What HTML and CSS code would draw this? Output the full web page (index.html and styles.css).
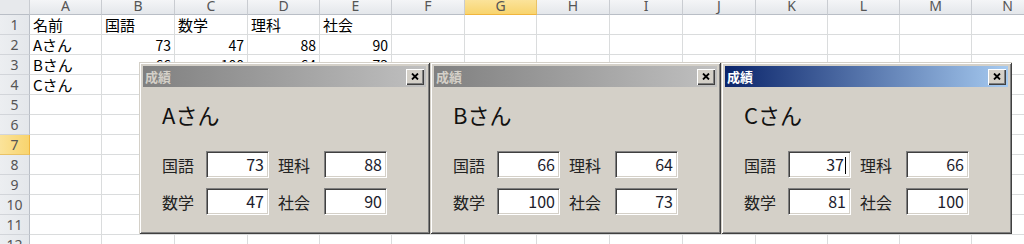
FILE: index.html
```html
<!DOCTYPE html>
<html lang="ja">
<head>
  <meta charset="UTF-8" />
  <title>成績フォーム</title>
  <link rel="stylesheet" href="styles.css">
</head>
<body>

<div class="sheet">
  <div class="hd corner"></div><div class="hd">A</div><div class="hd">B</div><div class="hd">C</div><div class="hd">D</div><div class="hd">E</div><div class="hd">F</div><div class="hd sel">G</div><div class="hd">H</div><div class="hd">I</div><div class="hd">J</div><div class="hd">K</div><div class="hd">L</div><div class="hd">M</div><div class="hd">N</div>

  <div class="rh">1</div><div class="c">名前</div><div class="c">国語</div><div class="c">数学</div><div class="c">理科</div><div class="c">社会</div><div class="c"></div><div class="c"></div><div class="c"></div><div class="c"></div><div class="c"></div><div class="c"></div><div class="c"></div><div class="c"></div><div class="c"></div>
  <div class="rh">2</div><div class="c">Aさん</div><div class="c num">73</div><div class="c num">47</div><div class="c num">88</div><div class="c num">90</div><div class="c"></div><div class="c"></div><div class="c"></div><div class="c"></div><div class="c"></div><div class="c"></div><div class="c"></div><div class="c"></div><div class="c"></div>
  <div class="rh">3</div><div class="c">Bさん</div><div class="c num">66</div><div class="c num">100</div><div class="c num">64</div><div class="c num">73</div><div class="c"></div><div class="c"></div><div class="c"></div><div class="c"></div><div class="c"></div><div class="c"></div><div class="c"></div><div class="c"></div><div class="c"></div>
  <div class="rh">4</div><div class="c">Cさん</div><div class="c"></div><div class="c"></div><div class="c"></div><div class="c"></div><div class="c"></div><div class="c"></div><div class="c"></div><div class="c"></div><div class="c"></div><div class="c"></div><div class="c"></div><div class="c"></div><div class="c"></div>
  <div class="rh">5</div><div class="c"></div><div class="c"></div><div class="c"></div><div class="c"></div><div class="c"></div><div class="c"></div><div class="c"></div><div class="c"></div><div class="c"></div><div class="c"></div><div class="c"></div><div class="c"></div><div class="c"></div><div class="c"></div>
  <div class="rh">6</div><div class="c"></div><div class="c"></div><div class="c"></div><div class="c"></div><div class="c"></div><div class="c"></div><div class="c"></div><div class="c"></div><div class="c"></div><div class="c"></div><div class="c"></div><div class="c"></div><div class="c"></div><div class="c"></div>
  <div class="rh sel">7</div><div class="c"></div><div class="c"></div><div class="c"></div><div class="c"></div><div class="c"></div><div class="c"></div><div class="c"></div><div class="c"></div><div class="c"></div><div class="c"></div><div class="c"></div><div class="c"></div><div class="c"></div><div class="c"></div>
  <div class="rh">8</div><div class="c"></div><div class="c"></div><div class="c"></div><div class="c"></div><div class="c"></div><div class="c"></div><div class="c"></div><div class="c"></div><div class="c"></div><div class="c"></div><div class="c"></div><div class="c"></div><div class="c"></div><div class="c"></div>
  <div class="rh">9</div><div class="c"></div><div class="c"></div><div class="c"></div><div class="c"></div><div class="c"></div><div class="c"></div><div class="c"></div><div class="c"></div><div class="c"></div><div class="c"></div><div class="c"></div><div class="c"></div><div class="c"></div><div class="c"></div>
  <div class="rh">10</div><div class="c"></div><div class="c"></div><div class="c"></div><div class="c"></div><div class="c"></div><div class="c"></div><div class="c"></div><div class="c"></div><div class="c"></div><div class="c"></div><div class="c"></div><div class="c"></div><div class="c"></div><div class="c"></div>
  <div class="rh">11</div><div class="c"></div><div class="c"></div><div class="c"></div><div class="c"></div><div class="c"></div><div class="c"></div><div class="c"></div><div class="c"></div><div class="c"></div><div class="c"></div><div class="c"></div><div class="c"></div><div class="c"></div><div class="c"></div>
  <div class="rh">12</div><div class="c"></div><div class="c"></div><div class="c"></div><div class="c"></div><div class="c"></div><div class="c"></div><div class="c"></div><div class="c"></div><div class="c"></div><div class="c"></div><div class="c"></div><div class="c"></div><div class="c"></div><div class="c"></div>
</div>

<div class="forms">
  <div class="form">
    <div class="titlebar">
      <span class="title">成績</span>
      <span class="close"><svg width="8" height="7" viewBox="0 0 8 7"><path d="M1 0.5 L7 6.5 M7 0.5 L1 6.5" stroke="#000" stroke-width="1.8" fill="none"/></svg></span>
    </div>
    <div class="form-body">
      <div class="name">Aさん</div>
      <div class="scores">
        <div class="label">国語</div><div class="box">73</div>
        <div class="label">理科</div><div class="box">88</div>
        <div class="label">数学</div><div class="box">47</div>
        <div class="label">社会</div><div class="box">90</div>
      </div>
    </div>
  </div>

  <div class="form">
    <div class="titlebar">
      <span class="title">成績</span>
      <span class="close"><svg width="8" height="7" viewBox="0 0 8 7"><path d="M1 0.5 L7 6.5 M7 0.5 L1 6.5" stroke="#000" stroke-width="1.8" fill="none"/></svg></span>
    </div>
    <div class="form-body">
      <div class="name">Bさん</div>
      <div class="scores">
        <div class="label">国語</div><div class="box">66</div>
        <div class="label">理科</div><div class="box">64</div>
        <div class="label">数学</div><div class="box">100</div>
        <div class="label">社会</div><div class="box">73</div>
      </div>
    </div>
  </div>

  <div class="form">
    <div class="titlebar active">
      <span class="title">成績</span>
      <span class="close"><svg width="8" height="7" viewBox="0 0 8 7"><path d="M1 0.5 L7 6.5 M7 0.5 L1 6.5" stroke="#000" stroke-width="1.8" fill="none"/></svg></span>
    </div>
    <div class="form-body">
      <div class="name">Cさん</div>
      <div class="scores">
        <div class="label">国語</div><div class="box">37<span class="caret"></span></div>
        <div class="label">理科</div><div class="box">66</div>
        <div class="label">数学</div><div class="box">81</div>
        <div class="label">社会</div><div class="box">100</div>
      </div>
    </div>
  </div>
</div>

</body>
</html>
```

FILE: styles.css
```css
* { box-sizing: border-box; }
html, body {
  margin: 0;
  padding: 0;
  width: 1024px;
  height: 244px;
  overflow: hidden;
  background: #fff;
}
body {
  position: relative;
  font-family: "Noto Sans CJK JP", "Noto Sans", sans-serif;
  color: #000;
}

/* spreadsheet */
.sheet {
  display: grid;
  grid-template-columns: 30px 72px 73px 73px 72px 72px 73px 72px 73px 73px 73px 72px 72px 72px 72px;
  grid-template-rows: 15px;
  grid-auto-rows: 20px;
}
.hd {
  background: linear-gradient(#f4f5f7, #e4e7eb);
  border-right: 1px solid #c9ccd1;
  border-bottom: 1px solid #b9bec6;
  color: #555;
  font-family: "Noto Sans", sans-serif;
  font-size: 14px;
  line-height: 11px;
  text-align: center;
  overflow: hidden;
}
.hd.corner { background: #e7e9ec; }
.hd.sel {
  background: linear-gradient(#fbe39a, #f8d46e);
  border-bottom: 1px solid #f0b53e;
  border-right-color: #e9c266;
  color: #555;
}
.rh {
  background: linear-gradient(to right, #eceef1, #e4e7eb);
  border-right: 1px solid #b9bec6;
  border-bottom: 1px solid #d2d5da;
  color: #555;
  font-family: "Noto Sans", sans-serif;
  font-size: 14px;
  line-height: 19px;
  text-align: center;
}
.rh.sel {
  background: linear-gradient(to right, #fbe39a, #f8d46e);
  border-right: 1px solid #f0b53e;
  border-bottom-color: #e9c266;
}
.c {
  border-right: 1px solid #dadcdd;
  border-bottom: 1px solid #dadcdd;
  font-size: 15px;
  line-height: 18px;
  padding: 1px 3px 0 3px;
  white-space: nowrap;
  overflow: hidden;
}
.c.num {
  text-align: right;
  font-size: 14px;
}

/* userforms laid over the sheet */
.forms {
  position: absolute;
  top: 62px;
  left: 139px;
  display: flex;
}
.form {
  width: 291px;
  height: 172px;
  padding: 4px;
  background: #d4d0c8;
  box-shadow: inset 1px 1px #d4d0c8, inset -1px -1px #404040, inset 2px 2px #fff, inset -2px -2px #808080;
}
.titlebar {
  height: 21px;
  display: flex;
  align-items: center;
  justify-content: space-between;
  padding: 0 2px 0 2px;
  background: linear-gradient(to right, #808080, #c0c0c0);
}
.titlebar.active { background: linear-gradient(to right, #0a246a, #a6caf0); }
.title {
  color: #d4d0c8;
  font-size: 13px;
  font-weight: bold;
}
.titlebar.active .title { color: #fff; }
.close {
  width: 18px;
  height: 16px;
  display: flex;
  align-items: center;
  justify-content: center;
  background: #d4d0c8;
  box-shadow: inset 1px 1px #fff, inset -1px -1px #404040, inset -2px -2px #808080;
}

.form-body { padding: 14px 0 0 19px; }
.name {
  font-size: 22px;
  line-height: 26px;
  color: #111;
}
.scores {
  margin-top: 24px;
  display: grid;
  grid-template-columns: 44px 72px 46px 63px;
  row-gap: 10px;
  align-items: center;
}
.label {
  font-size: 16px;
  color: #222;
}
.box {
  width: 63px;
  height: 27px;
  background: #fff;
  border: 1px solid;
  border-color: #808080 #fff #fff #808080;
  box-shadow: inset 1px 1px #404040, inset -1px -1px #d4d0c8;
  text-align: right;
  padding-right: 4px;
  font-size: 16px;
  line-height: 24px;
  color: #1c1c2c;
}
.caret {
  display: inline-block;
  width: 1px;
  height: 17px;
  margin-left: 1px;
  background: #000;
  vertical-align: -3px;
}
```
